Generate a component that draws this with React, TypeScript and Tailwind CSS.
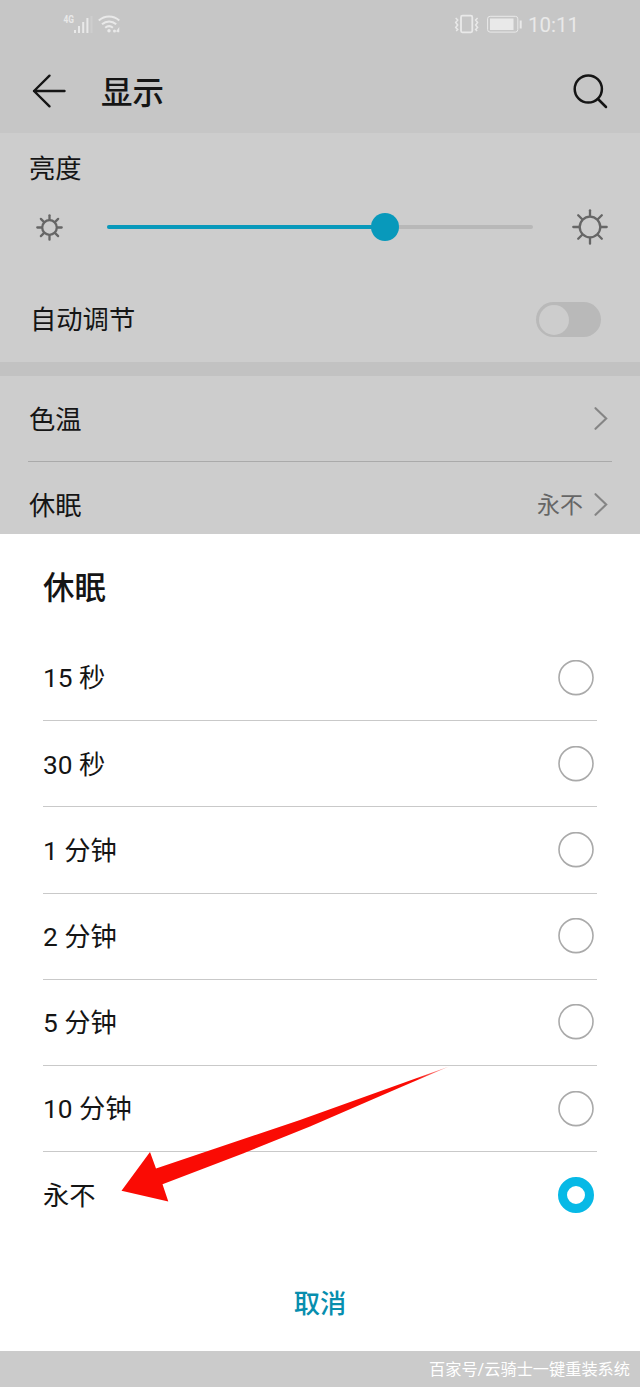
import { useState } from 'react';
import clsx from 'clsx';

const sleepOptions = ['15 秒', '30 秒', '1 分钟', '2 分钟', '5 分钟', '10 分钟', '永不'];

function StatusBar() {
  return (
    <div className="flex h-12 items-center justify-between pl-[62px] pr-[61px] text-[#e9e9e9]">
      <svg width="60" height="24" viewBox="62 12 60 24" fill="none" stroke="currentColor">
        <text x="63.5" y="23" fontSize="11" fontWeight="700" fill="currentColor" stroke="none" textLength="10.5" lengthAdjust="spacingAndGlyphs">
          4G
        </text>
        <path d="M75 33v-3M79 33v-7M83.2 33V22M87.4 33V18" strokeWidth="2" />
        <path d="M91.5 33V16" strokeWidth="2" opacity="0.25" />
        <path d="M98.8 20.5c6-5.3 14.5-5.3 20.5 0M102 24.3c4.3-3.7 10-3.7 14.2 0M105.2 27.7c2.4-2 5.3-2 7.7 0" strokeWidth="2" />
        <circle cx="109" cy="30.8" r="1.7" fill="currentColor" stroke="none" />
        <circle cx="114.500" cy="31" r="1.500" fill="currentColor" stroke="none" />
        <path d="M116.700 31.800l1.800-2.500v3" strokeWidth="1.500" />
      </svg>
      <div className="flex items-center">
        <svg width="70" height="24" viewBox="453 12 70 24" fill="none" stroke="currentColor">
          <rect x="461" y="15.7" width="11.3" height="16.6" rx="1.5" strokeWidth="1.8" />
          <path d="M455.7 18l2 2-2 2.500 2 2.500-2 2.500 2 2-1.500 1.500M477.600 18l-2 2 2 2.500-2 2.500 2 2.500-2 2 1.500 1.500" strokeWidth="1.5" />
          <rect x="487.6" y="16.3" width="30.2" height="15.8" rx="2.5" strokeWidth="1" />
          <rect x="490" y="18.5" width="23.5" height="11.5" fill="currentColor" stroke="none" />
          <path d="M520.7 20.5v8" strokeWidth="2" />
        </svg>
        <span className="ml-[5px] w-[51px] whitespace-nowrap pt-0.5 text-[20.5px] leading-6">10:11</span>
      </div>
    </div>
  );
}

function Sun({ size, r, inner }: { size: number; r: number; inner: number }) {
  const angles = [0, 45, 90, 135, 180, 225, 270, 315];
  return (
    <svg width={size} height={size} viewBox={`${-size / 2} ${-size / 2} ${size} ${size}`} fill="none" stroke="#666666" strokeWidth="2.3" strokeLinecap="round">
      <circle r={r} />
      {angles.map((a) => (
        <path key={a} d={`M0 ${-inner}V${-size / 2 + 1.3}`} transform={`rotate(${a})`} />
      ))}
    </svg>
  );
}

function Chevron() {
  return (
    <svg width="14" height="24" viewBox="0 0 14 24" fill="none" stroke="#858585" strokeWidth="2.1" strokeLinecap="round">
      <path d="M1.500 1.200l10.700 10.300L1.500 21.800" />
    </svg>
  );
}

export default function App() {
  const [selected, setSelected] = useState('永不');

  return (
    <div className="flex h-[1387px] w-[640px] flex-col overflow-hidden bg-[#cbcbcb] font-[Roboto,'Noto_Sans_CJK_SC',sans-serif] text-[26.3px] text-[#151515]">
      <header className="h-[133px] shrink-0 bg-[#c6c6c6]">
        <StatusBar />
        <div className="flex h-[85px] items-center px-8">
          <svg width="34" height="34" viewBox="0 0 34 34" fill="none" stroke="currentColor" strokeWidth="2.4" strokeLinecap="round" strokeLinejoin="round">
            <path d="M32.5 17H2M17.5 1.7L2 17l15.5 15.3" />
          </svg>
          <h1 className="ml-[35px] pt-1.5 text-[31.5px] font-medium leading-10">显示</h1>
          <svg className="ml-auto" width="36" height="36" viewBox="0 0 36 36" fill="none" stroke="currentColor" strokeWidth="2.5" strokeLinecap="round">
            <circle cx="16.3" cy="16" r="13.6" />
            <path d="M26 26l8 8" />
          </svg>
        </div>
      </header>

      {/* Brightness */}
      <section className="h-[229px] shrink-0 bg-[#cdcdcd]">
        <div className="h-[68px] px-[29px] pt-4 leading-10">亮度</div>
        <div className="flex h-[52px] items-center pl-[36px] pr-8">
          <Sun size={27} r={7.3} inner={8} />
          <div className="relative ml-[44px] h-1 w-[426px] rounded-full bg-[#b8b8b8]">
            <div className="h-full w-[278px] rounded-full bg-[#0899bb]" />
            <div className="absolute -top-3 left-[264px] size-7 rounded-full bg-[#0899bb]" />
          </div>
          <div className="ml-auto">
            <Sun size={36} r={10.3} inner={11} />
          </div>
        </div>
        <div className="flex h-[133px] items-center justify-between pl-[30px] pr-[39px]">
          <span className="pt-[3px]">自动调节</span>
          <div className="flex h-[35px] w-[65px] items-center rounded-full bg-[#b9b9b9] px-[3px]">
            <div className="size-[30px] rounded-full bg-[#cdcdcd]" />
          </div>
        </div>
      </section>

      <div className="h-3.5 shrink-0 bg-[#c2c2c2]" />

      <section className="h-[158px] shrink-0 bg-[#cdcdcd] px-7">
        <div className="flex h-[86px] items-center justify-between border-b border-[#aaaaaa] pl-px pr-1">
          <span className="pt-1">色温</span>
          <Chevron />
        </div>
        <div className="flex h-[86px] items-center pl-px pr-1">
          <span className="pt-1">休眠</span>
          <span className="ml-auto mr-[11px] pt-[3px] text-[23px] text-[#666666]">永不</span>
          <Chevron />
        </div>
      </section>

      {/* Sleep dialog */}
      <section className="relative h-[817px] shrink-0 bg-white px-[43px]">
        <h2 className="h-[101px] pt-[35px] text-[31.5px] font-medium leading-10">休眠</h2>
        <div>
          {sleepOptions.map((option, i) => (
            <button
              key={option}
              onClick={() => setSelected(option)}
              className={clsx(
                'flex h-[86.2px] w-full items-center justify-between pr-[3px] text-left',
                i < sleepOptions.length - 1 && 'border-b border-[#c9c9c9]',
              )}
            >
              <span className="pt-[3px]">{option}</span>
              {selected === option ? (
                <span className="size-9 rounded-full border-[9px] border-[#07b9e6]" />
              ) : (
                <svg className="size-9" viewBox="0 0 36 36" fill="none" stroke="#aaaaaa" strokeWidth="1.6">
                  <circle cx="18" cy="17.6" r="17" />
                </svg>
              )}
            </button>
          ))}
        </div>
        <button className="mt-[46px] block w-full text-center font-medium leading-10 text-[#078eae]">取消</button>

        <svg className="absolute left-[120px] top-[530px]" width="332" height="140" viewBox="120 1064 332 140">
          <defs>
            <linearGradient id="tail" x1="0" x2="1">
              <stop offset="0.9" stopColor="#fa0b04" />
              <stop offset="1" stopColor="#fa0b04" stopOpacity="0.3" />
            </linearGradient>
          </defs>
          <path d="M121.5 1190.8L150 1152l6 16.500L300 1120 449 1066.500 400 1087.500 310 1126.500 243 1153.500 162.500 1184.300 168.300 1201.500z" fill="url(#tail)" />
        </svg>
      </section>

      <footer className="flex h-9 items-center justify-end pr-[10px] pt-0.5 text-[16.2px] text-white">
        百家号/云骑士一键重装系统
      </footer>
    </div>
  );
}
